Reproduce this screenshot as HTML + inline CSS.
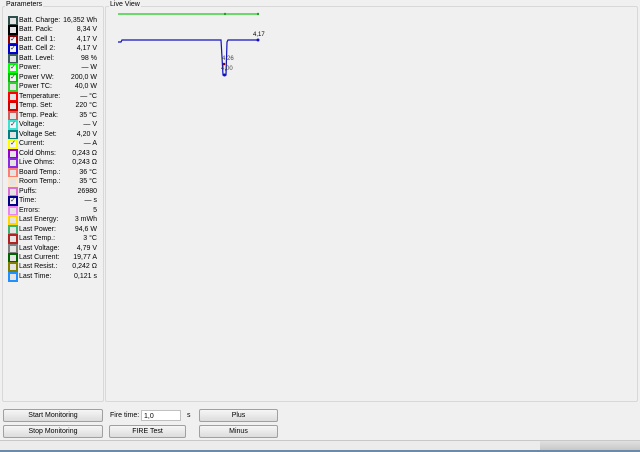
<!DOCTYPE html><html><head><style>
body{margin:0;width:640px;height:452px;background:#f0f0f0;font-family:"Liberation Sans",sans-serif;font-size:7px;color:#000;position:relative;overflow:hidden}
.abs{position:absolute}
.gb{position:absolute;border:1px solid #d8d8d8;border-radius:2px}
.t{position:absolute;background:#f0f0f0;padding:0 1px;font-size:7px}
.row{position:absolute;left:8px;width:89px;height:9px;line-height:9px}
.cb{position:absolute;left:0;top:0;width:6px;height:6px;border:2px solid;background:#e4e4e4;font-size:7px;line-height:6px;text-align:center;color:#224}
.cb.c{background:#f4f4f4}
.lb{position:absolute;left:11px}
.v{position:absolute;right:0}
.btn{position:absolute;height:11px;border:1px solid #a0a0a0;border-radius:2px;background:linear-gradient(#f6f6f6,#dcdcdc);text-align:center;line-height:11px;font-size:7px}
</style></head><body>
<div class="gb" style="left:2px;top:6px;width:100px;height:394px"></div>
<div class="t" style="left:5px;top:1px">Parameters</div>
<div class="gb" style="left:105px;top:6px;width:531px;height:394px"></div>
<div class="t" style="left:109px;top:1px">Live View</div>
<div id="rows"></div>
<script>
var d=[["Batt. Charge:","16,352 Wh","#2f4f4f",0],["Batt. Pack:","8,34 V","#000",0],["Batt. Cell 1:","4,17 V","#8b0000",1],["Batt. Cell 2:","4,17 V","#0000cd",1],["Batt. Level:","98 %","#3f5f5f",0],["Power:","— W","#00ff00",1],["Power VW:","200,0 W","#00c000",1],["Power TC:","40,0 W","#32cd32",0],["Temperature:","— °C","#ff0000",0],["Temp. Set:","220 °C","#d00000",0],["Temp. Peak:","35 °C","#cd5c5c",0],["Voltage:","— V","#40e0d0",1],["Voltage Set:","4,20 V","#008080",0],["Current:","— A","#ffff00",1],["Cold Ohms:","0,243 Ω","#9400d3",0],["Live Ohms:","0,243 Ω","#8a2be2",0],["Board Temp.:","36 °C","#fa8072",0],["Room Temp.:","35 °C","#ffe4c4",0],["Puffs:","26980","#da70d6",0],["Time:","— s","#00008b",1],["Errors:","5","#ee82ee",0],["Last Energy:","3 mWh","#ffd700",0],["Last Power:","94,6 W","#3cb371",0],["Last Temp.:","3 °C","#b22222",0],["Last Voltage:","4,79 V","#808080",0],["Last Current:","19,77 A","#006400",0],["Last Resist.:","0,242 Ω","#808000",0],["Last Time:","0,121 s","#1e90ff",0]];
var h="";d.forEach(function(r,i){h+='<div class="row" style="top:'+(16+i*9.48)+'px"><div class="cb'+(r[3]?' c':'')+'" style="border-color:'+r[2]+'">'+(r[3]?'✓':'')+'</div><span class="lb">'+r[0]+'</span><span class="v">'+r[1]+'</span></div>'});
document.getElementById("rows").innerHTML=h;
</script>
<svg class="abs" style="left:0;top:0" width="640" height="452">
<polyline points="118,14 258,14" stroke="#40d040" stroke-width="1.5" fill="none"/>
<circle cx="225" cy="14" r="1.2" fill="#20a020"/><circle cx="258" cy="14" r="1.2" fill="#20a020"/>
<polyline points="118,42 121,42 122,40 221,40 223,75 226,75 227,42 228,40 258,40" stroke="#1010c0" stroke-width="1.2" fill="none"/>
<circle cx="258" cy="40" r="1.5" fill="#1010c0"/><circle cx="224.5" cy="75" r="1.5" fill="#1010c0"/>
<circle cx="224" cy="64" r="1.3" fill="#8b0000"/>
<text x="253" y="36" font-size="6" font-family="Liberation Sans">4,17</text>
<text x="222" y="60" font-size="6" font-family="Liberation Sans" fill="#444">4,26</text>
<text x="221" y="70" font-size="6" font-family="Liberation Sans" fill="#444">4,00</text>
</svg>
<div class="btn" style="left:3px;top:409px;width:98px">Start Monitoring</div>
<div class="btn" style="left:3px;top:425px;width:98px">Stop Monitoring</div>
<div class="abs" style="left:110px;top:412px">Fire time:</div>
<div class="abs" style="left:141px;top:410px;height:11px;background:#fff;border:1px solid #c0c0c0;line-height:11px;padding-left:2px;box-sizing:border-box;width:40px">1,0</div>
<div class="abs" style="left:187px;top:412px">s</div>
<div class="btn" style="left:109px;top:425px;width:75px">FIRE Test</div>
<div class="btn" style="left:199px;top:409px;width:77px">Plus</div>
<div class="btn" style="left:199px;top:425px;width:77px">Minus</div>
<div class="abs" style="left:0;top:440px;width:640px;height:1px;background:#c8c8c8"></div>
<div class="abs" style="left:0;top:441px;width:540px;height:9px;background:#ececec"></div>
<div class="abs" style="left:540px;top:441px;width:100px;height:9px;background:linear-gradient(#e0e0e0,#c8c8c8)"></div>
<div class="abs" style="left:0;top:450px;width:640px;height:2px;background:#6a8aa8"></div>
</body></html>
